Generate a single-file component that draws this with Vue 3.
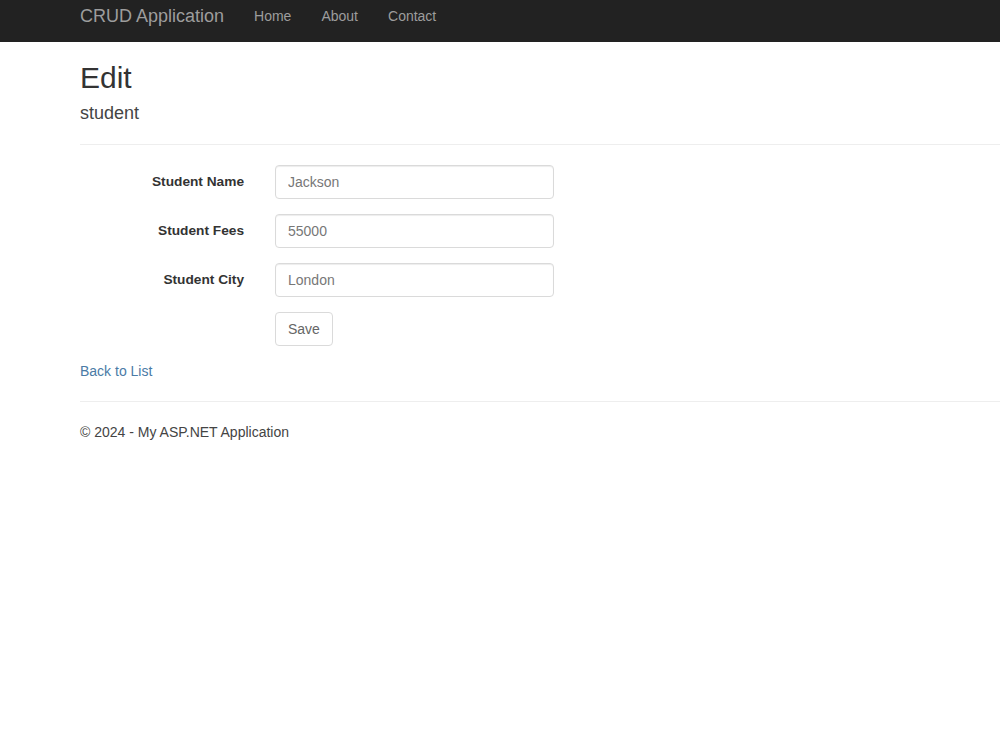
<script setup>
const links = ['Home', 'About', 'Contact'];
const fields = [
  { label: 'Student Name', value: 'Jackson' },
  { label: 'Student Fees', value: '55000' },
  { label: 'Student City', value: 'London' }
];
</script>

<template>
  <div class="navbar">
    <div class="nav-inner">
      <a class="brand">CRUD Application</a>
      <a class="nav-link" v-for="link in links" :key="link">{{ link }}</a>
    </div>
  </div>
  <div class="content">
    <h2>Edit</h2>
    <h4>student</h4>
    <hr class="head-line" />
    <form class="edit-form" @submit.prevent>
      <div class="form-row" v-for="field in fields" :key="field.label">
        <label>{{ field.label }}</label>
        <input type="text" :value="field.value" />
      </div>
      <div class="form-row">
        <span class="spacer"></span>
        <button type="submit">Save</button>
      </div>
    </form>
    <a class="back">Back to List</a>
    <hr />
    <p class="footer">© 2024 - My ASP.NET Application</p>
  </div>
</template>

<style>
body {
  background: #fff;
}
</style>

<style scoped>
.navbar {
  height: 42px;
  background: #222;
}

.nav-inner {
  display: flex;
  align-items: center;
  height: 32px;
  padding-left: 80px;
}

.brand {
  font: 18px "Liberation Sans", Arial, sans-serif;
  color: #9d9d9d;
  margin-right: 30px;
}

.nav-link {
  font: 14px "Liberation Sans", Arial, sans-serif;
  color: #9d9d9d;
  margin-right: 30px;
}

.content {
  padding-left: 80px;
  font: 14px/20px "Liberation Sans", Arial, sans-serif;
  color: #444;
}

h2 {
  margin: 19px 0 9px;
  font-size: 30px;
  font-weight: 500;
  line-height: 33px;
  color: #333;
}

h4 {
  margin: 0;
  font-size: 18px;
  font-weight: 500;
  line-height: 20px;
}

hr {
  margin: 20px 0;
  border: 0;
  border-top: 1px solid #eee;
}

.head-line {
  margin-top: 21px;
}

.edit-form {
  display: flex;
  flex-direction: column;
  gap: 15px;
}

.form-row {
  display: flex;
  align-items: center;
  gap: 31px;
}

label {
  width: 164px;
  text-align: right;
  font-size: 13.7px;
  font-weight: 700;
  color: #333;
}

.spacer {
  width: 164px;
}

input {
  box-sizing: border-box;
  width: 279px;
  height: 34px;
  padding: 6px 12px;
  border: 1px solid #dadada;
  border-radius: 4px;
  box-shadow: inset 0 1px 1px rgba(0, 0, 0, 0.075);
  font: 14px "Liberation Sans", Arial, sans-serif;
  color: #777;
}

button {
  height: 34px;
  padding: 6px 12px;
  background: #fff;
  border: 1px solid #dadada;
  border-radius: 4px;
  font: 14px "Liberation Sans", Arial, sans-serif;
  color: #666;
}

.back {
  display: block;
  margin-top: 15px;
  color: #4a7ba6;
}

.footer {
  margin: 0;
}
</style>
